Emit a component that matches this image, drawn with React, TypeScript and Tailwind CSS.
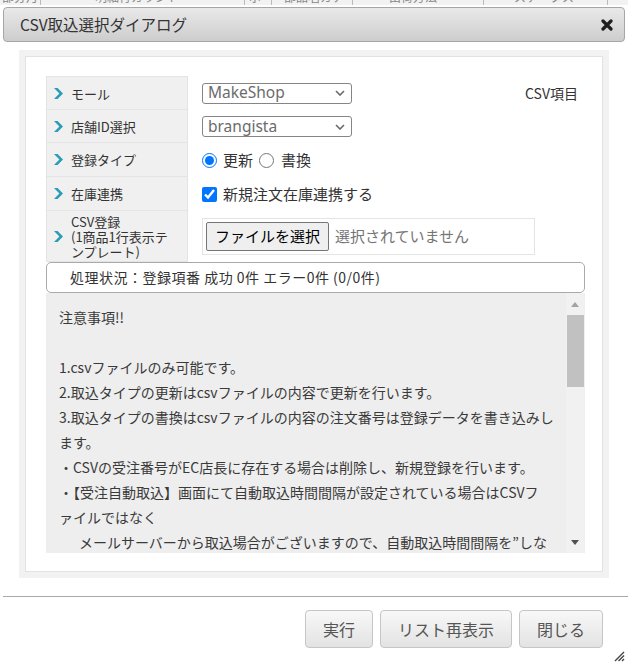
import React from "react";

const Chevron = () => (
  <svg width="9" height="11" viewBox="0 0 9 11" className="shrink-0">
    <polygon points="0,0 3.6,0 9,5.5 3.6,11 0,11 5.4,5.5" fill="#2a9db6" />
  </svg>
);

const SelectBox = ({ value }: { value: string }) => (
  <div className="w-[150px] h-[21px] border border-[#858585] rounded-[3px] bg-white flex items-center justify-between pl-[5px] pr-[6px]">
    <span className="font-['Noto_Sans',sans-serif] text-[15.5px] leading-none text-[#6b6b6b]">{value}</span>
    <svg width="10" height="6" viewBox="0 0 10 6">
      <polyline points="1,1 5,5 9,1" fill="none" stroke="#6a6a6a" strokeWidth="1.6" />
    </svg>
  </div>
);

const Label = ({ children, h, first }: { children: React.ReactNode; h: string; first?: boolean }) => (
  <div
    className={`w-[142px] shrink-0 ${h} bg-[#f0f0f0] border-b border-l border-r border-[#e4e4e4] ${first ? "border-t" : ""} flex items-center pl-[7px] gap-[8px] text-[13px] text-[#333]`}
  >
    <Chevron />
    <div className="leading-[15px]">{children}</div>
  </div>
);

const btn =
  "h-[38px] px-[17px] rounded-[4px] border border-[#c6c6c6] bg-linear-to-b from-[#f8f8f8] to-[#e3e3e3] text-[16px] text-[#555] flex items-center";

export default function App() {
  const lines: { t: string; indent?: boolean }[] = [
    { t: "注意事項!!" },
    { t: "\u00a0" },
    { t: "1.csvファイルのみ可能です。" },
    { t: "2.取込タイプの更新はcsvファイルの内容で更新を行います。" },
    { t: "3.取込タイプの書換はcsvファイルの内容の注文番号は登録データを書き込みし" },
    { t: "ます。" },
    { t: "・CSVの受注番号がEC店長に存在する場合は削除し、新規登録を行います。" },
    { t: "・【受注自動取込】画面にて自動取込時間間隔が設定されている場合はCSVフ" },
    { t: "ァイルではなく" },
    { t: "メールサーバーから取込場合がございますので、自動取込時間間隔を”しな", indent: true },
    { t: "い”に設定してください。" },
  ];

  return (
    <div className="w-[628px] h-[666px] bg-white relative overflow-hidden font-['Noto_Sans_CJK_JP','Noto_Sans',sans-serif] text-[#333]">
      {/* underlying page strip */}
      <div className="h-[5px] bg-[#f2f2f2] flex overflow-hidden text-[12px] text-[#888] leading-[16px]">
        <div className="w-[41px] border-r border-[#bbb] -mt-[11px] pl-[2px] whitespace-nowrap">部分月</div>
        <div className="w-[204px] border-r border-[#bbb] -mt-[11px] pl-[54px] whitespace-nowrap">明細行カウント</div>
        <div className="w-[27px] border-r border-[#bbb] -mt-[11px] pl-[4px] whitespace-nowrap">ボ</div>
        <div className="w-[81px] border-r border-[#bbb] -mt-[11px] pl-[12px] whitespace-nowrap">部品名カナ</div>
        <div className="w-[131px] border-r border-[#bbb] -mt-[11px] pl-[36px] whitespace-nowrap">出荷方法</div>
        <div className="w-[124px] border-r border-[#bbb] -mt-[11px] pl-[30px] whitespace-nowrap">ステータス</div>
        <div className="flex-1" />
      </div>

      {/* title bar */}
      <div className="mt-[2px] ml-[3px] w-[622px] h-[35px] rounded-[4px] border border-[#a6a6a6] bg-linear-to-b from-[#e9e9e9] to-[#cdcdcd] flex items-center justify-between pl-[16px] pr-[11px]">
        <span className="text-[15.5px] text-[#333]">CSV取込選択ダイアログ</span>
        <svg width="12" height="12" viewBox="0 0 12 12">
          <path d="M2 2 L10 10 M10 2 L2 10" stroke="#1e1e1e" strokeWidth="3.2" strokeLinecap="round" />
        </svg>
      </div>

      {/* body */}
      <div className="pt-[8px]">
        <div className="ml-[19px] w-[590px] h-[528px] bg-[#f2f2f2] p-[6px]">
          <div className="h-full border border-[#e2e2e2] bg-white pt-[19px] pl-[20px] pr-[17px]">
            {/* form table */}
            <div className="flex flex-col">
              <div className="flex">
                <Label h="h-[34px]" first>モール</Label>
                <div className="flex-1 flex items-center justify-between pl-[14px] pr-[7px]">
                  <SelectBox value="MakeShop" />
                  <span className="text-[14px] text-[#333]">CSV項目</span>
                </div>
              </div>
              <div className="flex">
                <Label h="h-[33px]">店舗ID選択</Label>
                <div className="flex-1 flex items-center pl-[14px]">
                  <SelectBox value="brangista" />
                </div>
              </div>
              <div className="flex">
                <Label h="h-[34px]">登録タイプ</Label>
                <div className="flex-1 flex items-center pl-[14px] text-[15px] text-[#333]">
                  <input type="radio" name="t" defaultChecked className="w-[15px] h-[15px] m-0 accent-[#0075ff]" />
                  <span className="ml-[6px]">更新</span>
                  <input type="radio" name="t" className="w-[15px] h-[15px] m-0 ml-[6px]" />
                  <span className="ml-[7px]">書換</span>
                </div>
              </div>
              <div className="flex">
                <Label h="h-[34px]">在庫連携</Label>
                <div className="flex-1 flex items-center pl-[14px] text-[15px] text-[#333]">
                  <input type="checkbox" defaultChecked className="w-[15px] h-[15px] m-0 accent-[#0075ff]" />
                  <span className="ml-[6px]">新規注文在庫連携する</span>
                </div>
              </div>
              <div className="flex">
                <Label h="h-[51px]">
                  <div>CSV登録</div>
                  <div>(1商品1行表示テ</div>
                  <div>ンプレート)</div>
                </Label>
                <div className="flex-1 flex items-center pl-[14px]">
                  <div className="w-[333px] h-[37px] border border-[#e4e4e4] flex items-center pl-[3px]">
                    <div className="w-[123px] h-[29px] bg-[#efefef] border border-[#767676] rounded-[2px] flex items-center justify-center text-[15px] text-black">
                      ファイルを選択
                    </div>
                    <span className="ml-[6px] text-[15px] text-[#757575]">選択されていません</span>
                  </div>
                </div>
              </div>
            </div>

            {/* status */}
            <div className="h-[31px] border border-[#aaa] rounded-[5px] bg-white flex items-center pl-[23px] text-[14px] tracking-[0.5px] text-[#333]">
              処理状況：登録項番 成功 0件 エラー0件 (0/0件)
            </div>

            {/* textarea */}
            <div className="h-[260px] bg-[#eeeeee] flex">
              <div className="flex-1 overflow-hidden pl-[13px] pt-[12px] text-[14px] leading-[25px] text-[#3a3a3a]">
                {lines.map((l, i) => (
                  <div key={i} className={`whitespace-nowrap ${l.indent ? "pl-[20px]" : ""}`}>
                    {l.t}
                  </div>
                ))}
              </div>
              <div className="w-[18px] mr-[1px] bg-[#f1f1f1] flex flex-col items-center">
                <div className="h-[22px] flex items-center justify-center">
                  <svg width="8" height="5" viewBox="0 0 8 5">
                    <polygon points="0,5 4,0 8,5" fill="#a3a3a3" />
                  </svg>
                </div>
                <div className="w-[17px] h-[72px] bg-[#c1c1c1]" />
                <div className="flex-1" />
                <div className="h-[22px] flex items-center justify-center">
                  <svg width="8" height="5" viewBox="0 0 8 5">
                    <polygon points="0,0 8,0 4,5" fill="#505050" />
                  </svg>
                </div>
              </div>
            </div>
          </div>
        </div>
      </div>

      {/* separator */}
      <div className="mt-[18px] ml-[3px] h-px bg-[#aaa]" />

      {/* buttons */}
      <div className="pt-[13px] pr-[25px] flex justify-end gap-[7px]">
        <div className={btn}>実行</div>
        <div className={btn}>リスト再表示</div>
        <div className={btn}>閉じる</div>
      </div>

      {/* resize handle */}
      <svg className="absolute right-[3px] bottom-[4px]" width="12" height="12" viewBox="0 0 12 12">
        <path d="M11 2 L2 11 M11 5.5 L5.5 11 M11 9 L9 11" stroke="#444" strokeWidth="1.4" />
      </svg>
    </div>
  );
}
